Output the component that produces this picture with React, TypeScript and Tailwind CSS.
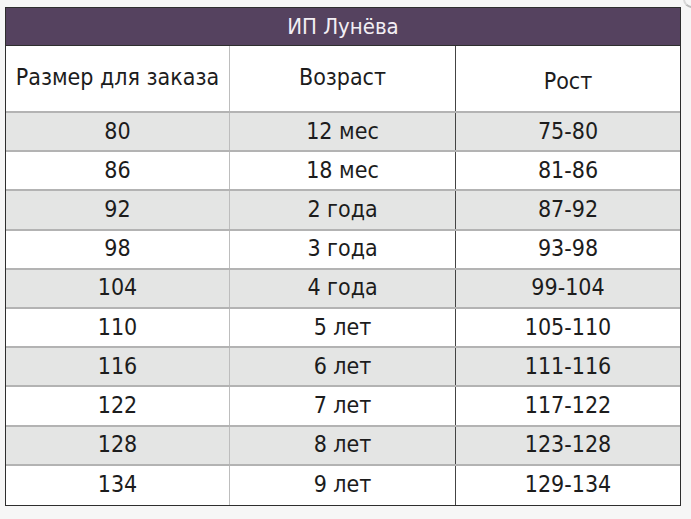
import React from "react";

const rows: [string, string, string][] = [
  ["80", "12 мес", "75-80"],
  ["86", "18 мес", "81-86"],
  ["92", "2 года", "87-92"],
  ["98", "3 года", "93-98"],
  ["104", "4 года", "99-104"],
  ["110", "5 лет", "105-110"],
  ["116", "6 лет", "111-116"],
  ["122", "7 лет", "117-122"],
  ["128", "8 лет", "123-128"],
  ["134", "9 лет", "129-134"],
];

export default function App() {
  return (
    <div className="w-[691px] h-[519px] bg-[#f6f6f6] pt-[7px] pl-[5px] text-[#1c1c1c] relative overflow-hidden font-['DejaVu_Sans_Condensed','DejaVu_Sans',sans-serif] font-stretch-condensed">
      <div className="absolute right-[-10px] top-[-10px] w-[18px] h-[18px] rounded-full border-2 border-[#bbbbbb] border-l-[#d8d8d8]" />
      <div className="w-[676px] border border-[#2e2e2e] bg-white">
        <div className="h-[38px] bg-[#55425f] border-b border-[#2e2e2e] flex items-center justify-center text-[#f2eef4] text-[22px] leading-none">
          ИП Лунёва
        </div>
        <div className="grid grid-cols-[224px_226px_1fr] h-[67px] border-b-2 border-[#b3b3b3] text-[23px] leading-none">
          <div className="flex items-center justify-center border-r border-[#bdbdbd] pb-[2px]">Размер для заказа</div>
          <div className="flex items-center justify-center border-r border-[#444444] pb-[2px]">Возраст</div>
          <div className="flex items-center justify-center pt-[5px]">Рост</div>
        </div>
        {rows.map((r, i) => (
          <div
            key={i}
            className={`grid grid-cols-[224px_226px_1fr] h-[39.2px] text-[23px] leading-none ${
              i % 2 === 0 ? "bg-[#e4e5e4]" : "bg-white"
            } ${i < rows.length - 1 ? "border-b-2 border-[#b3b3b3]" : ""}`}
          >
            <div className="flex items-center justify-center border-r border-[#bdbdbd] pb-[1px]">{r[0]}</div>
            <div className="flex items-center justify-center border-r border-[#444444] pb-[1px]">{r[1]}</div>
            <div className="flex items-center justify-center pb-[1px]">{r[2]}</div>
          </div>
        ))}
      </div>
    </div>
  );
}
